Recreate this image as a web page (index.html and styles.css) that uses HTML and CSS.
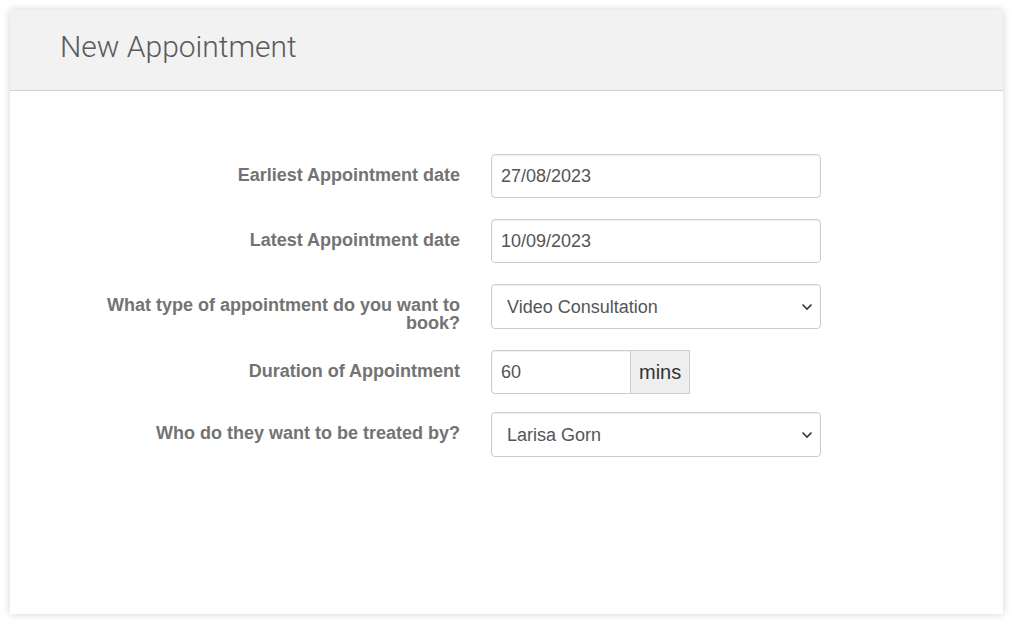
FILE: index.html
```html
<!DOCTYPE html>
<html lang="en">
<head>
    <meta charset="UTF-8">
    <title>New Appointment</title>
    <link rel="stylesheet" href="styles.css">
</head>
<body>
    <div class="panel">
        <div class="panel-heading">
            <h1>New Appointment</h1>
        </div>
        <form class="panel-body">
            <div class="form-row">
                <label for="earliest">Earliest Appointment date</label>
                <input type="text" id="earliest" value="27/08/2023">
            </div>
            <div class="form-row">
                <label for="latest">Latest Appointment date</label>
                <input type="text" id="latest" value="10/09/2023">
            </div>
            <div class="form-row tall">
                <label for="type">What type of appointment do you want to book?</label>
                <div class="select-wrap">
                    <select id="type">
                        <option>Video Consultation</option>
                    </select>
                    <svg class="chevron" width="12" height="8" viewBox="0 0 12 8"><path d="M1.5 1.5 L6 6 L10.5 1.5" fill="none" stroke="#333" stroke-width="1.6"/></svg>
                </div>
            </div>
            <div class="form-row short">
                <label for="duration">Duration of Appointment</label>
                <div class="input-group">
                    <input type="text" id="duration" value="60">
                    <span class="addon">mins</span>
                </div>
            </div>
            <div class="form-row">
                <label for="practitioner">Who do they want to be treated by?</label>
                <div class="select-wrap">
                    <select id="practitioner">
                        <option>Larisa Gorn</option>
                    </select>
                    <svg class="chevron" width="12" height="8" viewBox="0 0 12 8"><path d="M1.5 1.5 L6 6 L10.5 1.5" fill="none" stroke="#333" stroke-width="1.6"/></svg>
                </div>
            </div>
        </form>
    </div>
</body>
</html>
```

FILE: styles.css
```css
body {
    margin: 0;
    padding: 10px;
    background-color: #fff;
    font-family: "Liberation Sans", Arial, sans-serif;
}

.panel {
    width: 993px;
    height: 604px;
    background-color: #fff;
    box-shadow: 0 0 8px rgba(0,0,0,0.18);
    box-sizing: border-box;
}

.panel-heading {
    height: 80px;
    background-color: #f2f2f2;
    border-bottom: 1px solid #cfcfcf;
    padding-left: 50px;
    display: flex;
    align-items: center;
}

.panel-heading h1 {
    margin: 0 0 8px;
    font-family: Roboto, "Open Sans", sans-serif;
    font-weight: 300;
    font-size: 30px;
    color: #5a5a5a;
}

.panel-body {
    padding: 63px 0 0 80px;
}

.form-row {
    display: flex;
    align-items: flex-start;
    margin-bottom: 21px;
}

.form-row.tall,
.form-row.short {
    margin-bottom: 18px;
}

.form-row label {
    width: 370px;
    text-align: right;
    font-weight: bold;
    font-size: 18px;
    line-height: 18px;
    color: #737373;
    padding-top: 12px;
    margin-right: 31px;
}

input,
select {
    font-family: "Liberation Sans", Arial, sans-serif;
    font-size: 18px;
    color: #555;
    height: 44px;
    box-sizing: border-box;
    border: 1px solid #ccc;
    border-radius: 4px;
    background-color: #fff;
    padding: 0 15px;
    box-shadow: inset 0 1px 1px rgba(0,0,0,0.06);
}

input {
    width: 330px;
    padding: 0 9px;
}

.select-wrap {
    position: relative;
    width: 330px;
}

select {
    width: 100%;
    height: 45px;
    appearance: none;
    -webkit-appearance: none;
}

.chevron {
    position: absolute;
    right: 8px;
    top: 19px;
    pointer-events: none;
}

.input-group {
    display: flex;
}

.input-group input {
    width: 140px;
    border-radius: 4px 0 0 4px;
}

.addon {
    display: flex;
    align-items: center;
    height: 44px;
    box-sizing: border-box;
    padding: 0 8px;
    font-size: 20px;
    color: #333;
    background-color: #eee;
    border: 1px solid #ccc;
    border-left: none;
}
```
